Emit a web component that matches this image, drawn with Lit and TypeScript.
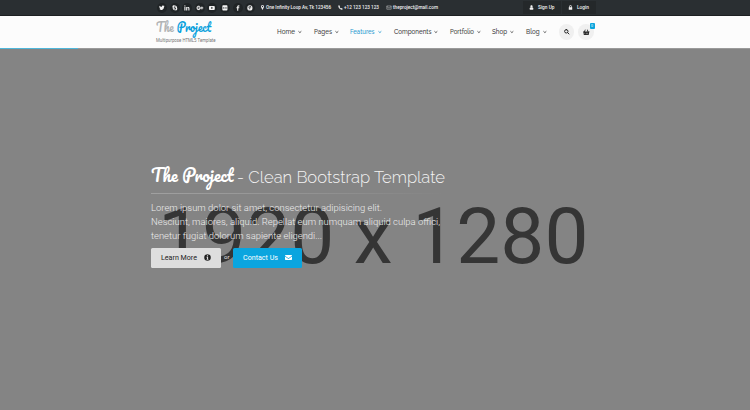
import { LitElement, html, css, svg } from "lit";
import { customElement } from "lit/decorators.js";

/** A line of real text fitted to a given width; baseline is measured from the top of its box. */
const line = (text: string, width: number, height: number, baseline: number, cls: string) => html`
  <svg class="line ${cls}" width=${width} height=${height}>
    <text x="0" y=${baseline} textLength=${width} lengthAdjust="spacingAndGlyphs">${text}</text>
  </svg>`;

const glyphs: Record<string, unknown> = {
  twitter: svg`<path d="M15.5 3.5l-1.6 1.1C14 10.700 9.500 14 5 14c-1.600 0-3.200-.5-4.500-1.300 1.600.1 3-.3 4.200-1.200-1.400-.1-2.400-.9-2.800-2.100h1.300C1.700 8.900.8 7.700.8 6.200l1.300.4C.7 5.500.4 3.800 1.200 2.400 2.900 4.400 5 5.500 7.800 5.700 7.200 3.200 9 1.600 11 1.600c1 0 1.700.4 2.300 1l1.900-.7-1.300 1.700z"/>`,
  skype: svg`<path fill-rule="evenodd" d="M4.500.8c1 0 1.900.3 2.600.8 4-.6 7.500 2.700 7 6.900 2 3.500-1.200 7.700-5.200 6.200C5 15.400 1.400 12 2 7.700.3 4.700 1.600.8 4.500.8zM11 5.700C10.300 3.200 4.700 3 4.700 6.100c0 2.900 4.400 2 4.400 3.600 0 1.300-2.400 1-3 0-.7-.9-2 .1-1.400 1.100 1.100 2 6.600 2 6.600-1.200 0-3.100-4.500-2.300-4.500-3.500 0-1 1.800-.9 2.500-.2.700.9 2 .7 1.700-.2z"/>`,
  linkedin: svg`<path d="M1 5.500h3V15H1zM2.500 1a1.700 1.700 0 110 3.400 1.700 1.700 0 010-3.400zM6 5.500h3v1.300c1.500-2.400 6-2 6 2.200v6h-3v-5.300c0-2.600-3-2.400-3 0V15H6z"/>`,
  google: svg`<path stroke="currentColor" stroke-width=".6" d="M-1 8a5.500 5.500 0 019.500-3.900L7 5.800C5 4 1.500 5.500 1.500 8c0 3.300 4.900 4 5.700 1H4.500V7h5.200c.6 3.800-1.500 6.500-5 6.500A5.500 5.500 0 01-1 8zm13.500-3.300h2v2.500H17V9.300h-2.500v2.500h-2V9.300H10V7.200h2.500z"/>`,
  youtube: svg`<path fill-rule="evenodd" d="M2.500 2.500h11Q16 2.500 16 5v6q0 2.500-2.500 2.500h-11Q0 13.500 0 11V5q0-2.500 2.500-2.500zM6.300 5v6l5-3z"/>`,
  flickr: svg`<path fill-rule="evenodd" d="M3 1h10q2 0 2 2v10q0 2-2 2H3q-2 0-2-2V3q0-2 2-2zm2 5a2 2 0 100 4 2 2 0 000-4zm6 0a2 2 0 100 4 2 2 0 000-4z"/>`,
  facebook: svg`<path d="M12 1v3h-1.600C9 4 9 4.700 9 6h3l-.5 3H9v7H6V9H4V6h2C6 2.500 7 .5 12 1z"/>`,
  pinterest: svg`<path fill-rule="evenodd" d="M8 .8a7.200 7.200 0 110 14.400A7.200 7.200 0 018 .8zM5.800 13l1-3.900c2 1.700 5-.3 4.800-3.400C11.400 1.600 4.400 2 4.300 6.300c0 1.200.4 2.200 1.300 2.600l.4-1.300C4.800 5.400 6.200 4 8 4c3 0 2.200 5 .3 4.800-1.100-.1-1-1-.5-3.100H6.500L4.900 12z"/>`,
  pin: svg`<path fill-rule="evenodd" d="M8 0a5 5 0 015 5c0 2.500-2 5-5 11C5 10 3 7.500 3 5a5 5 0 015-5zm0 2.700a2.300 2.300 0 100 4.600 2.300 2.300 0 000-4.600z"/>`,
  phone: svg`<path d="M4 1l2.500 4L5 6.700c.8 2 2.300 3.500 4.300 4.300L11 9.500l4 2.500c0 2-1.500 3-3 3C6 14.500 1.500 9 1 4c0-1.500 1-3 3-3z"/>`,
  mail: svg`<path fill="none" stroke="currentColor" stroke-width="1.300" d="M1 3h14v10.500H1zM1 5l7 5 7-5"/>`,
  envelope: svg`<path d="M1.500 2.500h13q1.500 0 1.500 1.300L8 9.500 0 3.800Q0 2.500 1.500 2.500zM0 5.500l8 5.700 8-5.700v6.700q0 1.500-1.500 1.500h-13Q0 13.700 0 12.200z"/>`,
  user: svg`<path d="M8 1c2.300 0 3.500 1.600 3.500 3.800S10.200 9 8 9 4.500 7 4.500 4.800 5.700 1 8 1zM4.500 8c2 2 5 2 7 0 2 .5 2.500 3 2.500 5q0 2-2 2H4q-2 0-2-2c0-2 .5-4.500 2.500-5z"/>`,
  lock: svg`<path fill-rule="evenodd" d="M4 7V5a4 4 0 018 0v2h1.500v8h-11V7zm2 0h4V5a2 2 0 00-4 0z"/>`,
  search: svg`<path fill="none" stroke="currentColor" stroke-width="2.800" stroke-linecap="round" d="M6.700 1.700a5 5 0 110 10 5 5 0 010-10zM10.500 10.500L14.500 14.500"/>`,
  basket: svg`<path fill-rule="evenodd" d="M0 6h2.500L5 1l1.600.7L4.700 6h6.600L9.400 1.700 11 1l2.500 5H16v2h-1l-1 7H2L1 8H0zm4.200 3.500l.3 3.500h.9l-.3-3.500zm3.400 0V13h.9V9.500zm3.400 0l-.3 3.500h.9l.3-3.500z"/>`,
  info: svg`<path fill-rule="evenodd" d="M8 .5a7.500 7.500 0 110 15 7.500 7.500 0 010-15zM6.800 2.700v2.300h2.500V2.700zM5.700 6.300v1.500h1v4h-1v1.500h4.800v-1.500H9.400V6.300z"/>`,
  chevron: svg`<path fill="none" stroke="currentColor" stroke-width="3.600" d="M2 5l6 5.600L14 5"/>`,
};

const icon = (name: string) =>
  html`<svg class="icon" viewBox="0 0 16 16" fill="currentColor">${glyphs[name]}</svg>`;

const socials = ["twitter", "skype", "linkedin", "google", "youtube", "flickr", "facebook", "pinterest"];
const menu: [string, number][] = [
  ["Home", 18], ["Pages", 18], ["Features", 24.5], ["Components", 37.5],
  ["Portfolio", 24], ["Shop", 15], ["Blog", 13.5],
];

@customElement("app-root")
export class AppRoot extends LitElement {
  static styles = css`
    :host { display: block; height: 410px; background: #848484; overflow: hidden; }
    * { box-sizing: border-box; }
    svg { display: block; flex: none; overflow: visible; }
    .line { fill: currentColor; font-family: Roboto, "Liberation Sans", sans-serif; }
    .icon { width: 5px; height: 5px; }

    .top { height: 16px; background: #2a2f32; border-bottom: 1px solid #1d2022; color: #f2f2f2; }
    .wrap { width: 450px; height: 100%; margin-left: 150px; display: flex; align-items: center; }
    .socials { display: flex; gap: 2.6px; margin-left: 7px; }
    .dot { width: 10px; height: 10px; border-radius: 50%; background: #202426; display: grid; place-items: center; }
    .dot .icon { width: 5.8px; height: 5.8px; }
    .contact { display: flex; align-items: center; gap: 1px; }
    .place { margin-left: 5px; }
    .place .icon { margin-right: -0.5px; }
    .call { margin-left: 7px; }
    .post { margin-left: 7px; }
    .post .icon { width: 6px; }
    .tiny { font-size: 5.4px; font-weight: 500; }
    .account { display: flex; gap: 1px; margin-left: auto; margin-right: 4px; height: 13px; }
    .tab { background: #24282a; display: flex; align-items: center; gap: 4px; padding: 0 7px 0 6px; }

    .header { height: 32px; background: #fcfcfc; color: #444; }
    .brand { margin-left: 6px; width: 59.5px; height: 27px; }
    .logo { font-family: Pacifico, "Lato", cursive; font-size: 11.8px; }
    .grey { fill: #b2b4b5; }
    .blue { fill: #0aa1dc; }
    .tag { font-size: 4.8px; color: #777; }
    .menu { display: flex; margin-left: 61.5px; width: 283px; }
    .item { display: flex; align-items: center; gap: 3px; margin-right: 11.9px; color: #3c3c3c; }
    .item .icon { width: 3.8px; height: 4px; }
    .active { color: #2399d0; }
    .nav { font-family: Raleway, Lato, sans-serif; font-size: 6.6px; font-weight: 500; }
    .tools { display: flex; gap: 4px; margin-left: -1.5px; }
    .round { position: relative; width: 15.5px; height: 15.5px; border-radius: 50%; background: #f0f0f0; display: grid; place-items: center; color: #222; }
    .round .icon { width: 5.5px; height: 5.5px; }
    .basket .icon { width: 6.5px; height: 6.5px; }
    .badge { position: absolute; right: -1.5px; top: -1px; width: 5.5px; height: 5.5px; border-radius: 1px; background: #0ba5dd; color: #fff; display: grid; place-items: center; }
    .count { font-size: 3.5px; }

    .hero { position: relative; height: 362px; border-top: 1px solid #9a9a9a; }
    .progress { position: absolute; left: 0; top: -1px; width: 78px; height: 1px; background: #4fb7da; }
    .size { position: absolute; left: 158px; top: 143px; color: #353535; }
    .huge { font-size: 78.5px; }
    .copy { position: relative; padding: 115px 0 0 150.5px; color: #f3f3f3; }
    .title { display: flex; gap: 4px; height: 27px; }
    .script { font-family: Pacifico, "Lato", cursive; font-size: 17.6px; color: #fff; }
    .light { font-family: Raleway, Lato, sans-serif; font-weight: 300; font-size: 17.3px; }
    .rule { width: 295px; height: 1px; margin: 2px 0 7.3px; background: linear-gradient(90deg, #a0a0a0, #929292 55%, #848484); }
    .body { font-size: 9.2px; font-weight: 300; color: #ededed; }
    .actions { display: flex; align-items: center; margin-top: 5.7px; }
    .btn { height: 19.5px; border-radius: 1.5px; display: flex; align-items: center; justify-content: space-between; padding: 0 10px; }
    .btn .icon { width: 7px; height: 7px; }
    .pale { width: 70.5px; background: #dedede; color: #222; }
    .bright { width: 69.5px; background: #0aa5df; color: #fff; }
    .label { font-size: 7.3px; }
    .or { width: 11.5px; display: grid; place-items: center; color: #e6e6e6; }
    .small { font-size: 5.8px; }
  `;

  render() {
    return html`
      <div class="top"><div class="wrap">
        <div class="socials">${socials.map((s) => html`<span class="dot">${icon(s)}</span>`)}</div>
        <div class="contact place">${icon("pin")}${line("One Infinity Loop Av, Tk 123456", 65, 7, 5.4, "tiny")}</div>
        <div class="contact call">${icon("phone")}${line("+12 123 123 123", 35, 7, 5.4, "tiny")}</div>
        <div class="contact post">${icon("mail")}${line("theproject@mail.com", 45, 7, 5.4, "tiny")}</div>
        <div class="account">
          <div class="tab">${icon("user")}${line("Sign Up", 16.5, 7, 5.4, "tiny")}</div>
          <div class="tab">${icon("lock")}${line("Login", 12, 7, 5.4, "tiny")}</div>
        </div>
      </div></div>
      <div class="header"><div class="wrap">
        <div class="brand">
          <svg class="line logo" width="56" height="19">
            <text x="0" y="13" textLength="55" lengthAdjust="spacingAndGlyphs"><tspan class="grey">The </tspan><tspan class="blue">Project</tspan></text>
          </svg>
          ${line("Multipurpose HTML5 Template", 59.5, 7, 3.9, "tag")}
        </div>
        <div class="menu">${menu.map(([name, w]) => html`
          <div class="item ${name === "Features" ? "active" : ""}">${line(name, w, 8, 6.2, "nav")}${icon("chevron")}</div>`)}
        </div>
        <div class="tools">
          <div class="round">${icon("search")}</div>
          <div class="round basket">${icon("basket")}<div class="badge">${line("0", 2, 4, 3.2, "count")}</div></div>
        </div>
      </div></div>
      <div class="hero">
        <div class="progress"></div>
        <div class="size">${line("1920 x 1280", 430.5, 90, 70.5, "huge")}</div>
        <div class="copy">
          <div class="title">
            ${line("The Project", 82.5, 26, 18, "script")}
            ${line("- Clean Bootstrap Template", 208, 26, 18.5, "light")}
          </div>
          <div class="rule"></div>
          ${line("Lorem ipsum dolor sit amet, consectetur adipisicing elit.", 231, 13.7, 9.5, "body")}
          ${line("Nesciunt, maiores, aliquid. Repellat eum numquam aliquid culpa offici,", 289, 13.7, 9.5, "body")}
          ${line("tenetur fugiat dolorum sapiente eligendi...", 171, 13.7, 9.5, "body")}
          <div class="actions">
            <div class="btn pale">${line("Learn More", 36, 9, 7.2, "label")}${icon("info")}</div>
            <div class="or">${line("or", 5.5, 7, 5, "small")}</div>
            <div class="btn bright">${line("Contact Us", 35, 9, 7.2, "label")}${icon("envelope")}</div>
          </div>
        </div>
      </div>`;
  }
}
